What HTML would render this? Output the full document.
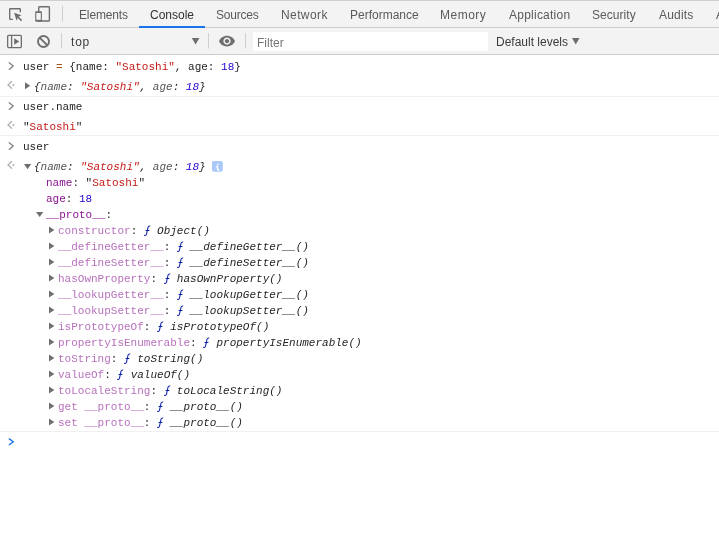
<!DOCTYPE html>
<html><head><meta charset="utf-8">
<style>
*{margin:0;padding:0;box-sizing:border-box}
html,body{width:719px;height:538px;overflow:hidden;background:#fff}
body{position:relative;font-family:"Liberation Sans",sans-serif}
.tabbar{position:absolute;left:0;top:0;width:719px;height:28px;background:#f3f3f3;border-top:1px solid #d0d0d0;border-bottom:1px solid #cdcdcd}
.tab{will-change:transform;position:absolute;top:7px;font-size:12px;color:#5a5a5a;white-space:nowrap}
.tab.sel{color:#333}
.underline{position:absolute;left:139px;top:25px;width:66px;height:2px;background:#1a73e8}
.toolbar{position:absolute;left:0;top:28px;width:719px;height:27px;background:#f3f3f3;border-bottom:1px solid #cdcdcd}
.vsep{position:absolute;width:1px;background:#ccc}
.filter{position:absolute;left:253px;top:32px;width:235px;height:19px;background:#fff}
.tb{will-change:transform;position:absolute;font-size:12px;color:#3c3c3c;white-space:nowrap}
.con{will-change:transform;position:absolute;left:0;top:55px;width:719px;font-family:"Liberation Mono",monospace;font-size:11px}
.row{position:absolute;left:0;white-space:pre;height:16px;line-height:16px;color:#242424}
.sep{position:absolute;left:0;width:719px;height:1px;background:#f0f0f0}
.s{color:#c41a16}
.n{color:#1c00cf}
.k{color:#881391}
.p{color:#a5a5a5}
.i{font-style:italic}
.fx{display:inline-block;vertical-align:top;overflow:visible}
.f{color:#0d22aa;font-style:italic}
.op{color:#a6541a}
.pk{color:#565656}
.kl{color:#b871bd}
i{font-style:italic}
.fx{display:inline-block;vertical-align:top;overflow:visible}
</style></head><body>
<div class="tabbar">
  <svg style="position:absolute;left:0;top:0" width="60" height="27"></svg>
  <div class="tab" style="left:79px;letter-spacing:-0.14px">Elements</div>
  <div class="tab sel" style="left:150px">Console</div>
  <div class="tab" style="left:216px;letter-spacing:-0.2px">Sources</div>
  <div class="tab" style="left:281px;letter-spacing:0.4px">Network</div>
  <div class="tab" style="left:350px">Performance</div>
  <div class="tab" style="left:440px;letter-spacing:0.5px">Memory</div>
  <div class="tab" style="left:509px;letter-spacing:0.24px">Application</div>
  <div class="tab" style="left:592px;letter-spacing:0.05px">Security</div>
  <div class="tab" style="left:659px;letter-spacing:0.2px">Audits</div>
  <div class="tab" style="left:716px">A</div>
  <div class="underline"></div>
</div>
<div class="toolbar"></div>
<div class="filter"></div>
<div class="tb" style="left:71px;top:35px;letter-spacing:0.8px">top</div>
<div class="tb" style="left:257px;top:36px;color:#757575">Filter</div>
<div class="tb" style="left:496px;top:35px">Default levels</div>

<div class="con">
<div class="row " style="top:4px;left:23px">user <span class="op">=</span> {name: <span class="s">"Satoshi"</span>, age: <span class="n">18</span>}</div>
<div class="row " style="top:24px;left:34px"><i>{<span class="pk">name</span>: <span class="s">"Satoshi"</span>, <span class="pk">age</span>: <span class="n">18</span>}</i></div>
<div class="row " style="top:44px;left:23px">user.name</div>
<div class="row " style="top:64px;left:23px">"<span class="s">Satoshi</span>"</div>
<div class="row " style="top:84px;left:23px">user</div>
<div class="row " style="top:104px;left:34px"><i>{<span class="pk">name</span>: <span class="s">"Satoshi"</span>, <span class="pk">age</span>: <span class="n">18</span>}</i></div>
<div class="row " style="top:120px;left:46px"><span class="k">name</span>: "<span class="s">Satoshi</span>"</div>
<div class="row " style="top:136px;left:46px"><span class="k">age</span>: <span class="n">18</span></div>
<div class="row " style="top:152px;left:46px"><span class="k">__proto__</span>:</div>
<div class="row " style="top:168px;left:58px"><span class="kl">constructor</span>: <svg class="fx" width="6.6" height="16" viewBox="0 0 6.6 16"><path d="M6.2 3.3 C5.4 2.8 4.3 3.0 4 4.3 L2.5 11.2 C2.2 12.4 1.2 12.8 0.2 12.3 M1.6 7.4 H5.4" fill="none" stroke="#0d22aa" stroke-width="1.05"/></svg> <i>Object()</i></div>
<div class="row " style="top:184px;left:58px"><span class="kl">__defineGetter__</span>: <svg class="fx" width="6.6" height="16" viewBox="0 0 6.6 16"><path d="M6.2 3.3 C5.4 2.8 4.3 3.0 4 4.3 L2.5 11.2 C2.2 12.4 1.2 12.8 0.2 12.3 M1.6 7.4 H5.4" fill="none" stroke="#0d22aa" stroke-width="1.05"/></svg> <i>__defineGetter__()</i></div>
<div class="row " style="top:200px;left:58px"><span class="kl">__defineSetter__</span>: <svg class="fx" width="6.6" height="16" viewBox="0 0 6.6 16"><path d="M6.2 3.3 C5.4 2.8 4.3 3.0 4 4.3 L2.5 11.2 C2.2 12.4 1.2 12.8 0.2 12.3 M1.6 7.4 H5.4" fill="none" stroke="#0d22aa" stroke-width="1.05"/></svg> <i>__defineSetter__()</i></div>
<div class="row " style="top:216px;left:58px"><span class="kl">hasOwnProperty</span>: <svg class="fx" width="6.6" height="16" viewBox="0 0 6.6 16"><path d="M6.2 3.3 C5.4 2.8 4.3 3.0 4 4.3 L2.5 11.2 C2.2 12.4 1.2 12.8 0.2 12.3 M1.6 7.4 H5.4" fill="none" stroke="#0d22aa" stroke-width="1.05"/></svg> <i>hasOwnProperty()</i></div>
<div class="row " style="top:232px;left:58px"><span class="kl">__lookupGetter__</span>: <svg class="fx" width="6.6" height="16" viewBox="0 0 6.6 16"><path d="M6.2 3.3 C5.4 2.8 4.3 3.0 4 4.3 L2.5 11.2 C2.2 12.4 1.2 12.8 0.2 12.3 M1.6 7.4 H5.4" fill="none" stroke="#0d22aa" stroke-width="1.05"/></svg> <i>__lookupGetter__()</i></div>
<div class="row " style="top:248px;left:58px"><span class="kl">__lookupSetter__</span>: <svg class="fx" width="6.6" height="16" viewBox="0 0 6.6 16"><path d="M6.2 3.3 C5.4 2.8 4.3 3.0 4 4.3 L2.5 11.2 C2.2 12.4 1.2 12.8 0.2 12.3 M1.6 7.4 H5.4" fill="none" stroke="#0d22aa" stroke-width="1.05"/></svg> <i>__lookupSetter__()</i></div>
<div class="row " style="top:264px;left:58px"><span class="kl">isPrototypeOf</span>: <svg class="fx" width="6.6" height="16" viewBox="0 0 6.6 16"><path d="M6.2 3.3 C5.4 2.8 4.3 3.0 4 4.3 L2.5 11.2 C2.2 12.4 1.2 12.8 0.2 12.3 M1.6 7.4 H5.4" fill="none" stroke="#0d22aa" stroke-width="1.05"/></svg> <i>isPrototypeOf()</i></div>
<div class="row " style="top:280px;left:58px"><span class="kl">propertyIsEnumerable</span>: <svg class="fx" width="6.6" height="16" viewBox="0 0 6.6 16"><path d="M6.2 3.3 C5.4 2.8 4.3 3.0 4 4.3 L2.5 11.2 C2.2 12.4 1.2 12.8 0.2 12.3 M1.6 7.4 H5.4" fill="none" stroke="#0d22aa" stroke-width="1.05"/></svg> <i>propertyIsEnumerable()</i></div>
<div class="row " style="top:296px;left:58px"><span class="kl">toString</span>: <svg class="fx" width="6.6" height="16" viewBox="0 0 6.6 16"><path d="M6.2 3.3 C5.4 2.8 4.3 3.0 4 4.3 L2.5 11.2 C2.2 12.4 1.2 12.8 0.2 12.3 M1.6 7.4 H5.4" fill="none" stroke="#0d22aa" stroke-width="1.05"/></svg> <i>toString()</i></div>
<div class="row " style="top:312px;left:58px"><span class="kl">valueOf</span>: <svg class="fx" width="6.6" height="16" viewBox="0 0 6.6 16"><path d="M6.2 3.3 C5.4 2.8 4.3 3.0 4 4.3 L2.5 11.2 C2.2 12.4 1.2 12.8 0.2 12.3 M1.6 7.4 H5.4" fill="none" stroke="#0d22aa" stroke-width="1.05"/></svg> <i>valueOf()</i></div>
<div class="row " style="top:328px;left:58px"><span class="kl">toLocaleString</span>: <svg class="fx" width="6.6" height="16" viewBox="0 0 6.6 16"><path d="M6.2 3.3 C5.4 2.8 4.3 3.0 4 4.3 L2.5 11.2 C2.2 12.4 1.2 12.8 0.2 12.3 M1.6 7.4 H5.4" fill="none" stroke="#0d22aa" stroke-width="1.05"/></svg> <i>toLocaleString()</i></div>
<div class="row " style="top:344px;left:58px"><span class="kl">get __proto__</span>: <svg class="fx" width="6.6" height="16" viewBox="0 0 6.6 16"><path d="M6.2 3.3 C5.4 2.8 4.3 3.0 4 4.3 L2.5 11.2 C2.2 12.4 1.2 12.8 0.2 12.3 M1.6 7.4 H5.4" fill="none" stroke="#0d22aa" stroke-width="1.05"/></svg> <i>__proto__()</i></div>
<div class="row " style="top:360px;left:58px"><span class="kl">set __proto__</span>: <svg class="fx" width="6.6" height="16" viewBox="0 0 6.6 16"><path d="M6.2 3.3 C5.4 2.8 4.3 3.0 4 4.3 L2.5 11.2 C2.2 12.4 1.2 12.8 0.2 12.3 M1.6 7.4 H5.4" fill="none" stroke="#0d22aa" stroke-width="1.05"/></svg> <i>__proto__()</i></div>
</div>
<svg style="position:absolute;left:0;top:0" width="719" height="538" viewBox="0 0 719 538">
<g fill="none" stroke="#6e6e6e" stroke-width="1.4">
  <path d="M12.8 19.3 H10.3 Q9.7 19.3 9.7 18.7 V9.3 Q9.7 8.7 10.3 8.7 H19.7 Q20.3 8.7 20.3 9.3 V12.2" stroke-width="1.35"/>
  <path d="M18.2 17.2 L21.6 20.6" stroke-width="1.6"/>
  <rect x="38.7" y="6.7" width="10.7" height="14.3" rx="0.8"/>
</g>
<path d="M14.1 12.8 L21.4 15.3 L18.3 16.9 L16.5 20.5 Z" fill="#6e6e6e"/>
<rect x="35.2" y="11.2" width="6.7" height="10.6" rx="0.8" fill="#6e6e6e"/>
<rect x="36.3" y="13" width="4.5" height="6.8" fill="#f3f3f3"/>
<g fill="none" stroke="#6e6e6e" stroke-width="1.3">
  <rect x="7.65" y="35.45" width="13.7" height="12.1" rx="1"/>
  <path d="M11.6 35.5 V47.5"/>
  <circle cx="43.5" cy="41.5" r="5.5" stroke-width="1.9"/>
  <path d="M39.6 37.6 L47.4 45.4" stroke-width="1.9"/>
</g>
<path d="M14.2 38.3 L19.2 41.5 L14.2 44.7 Z" fill="#6e6e6e"/>
<path d="M191.8 38 H199.4 L195.6 44.4 Z" fill="#6e6e6e"/>
<path d="M572 38 H579.5 L575.75 44.4 Z" fill="#6e6e6e"/>
<path transform="translate(227 41.1) scale(0.727) translate(-12 -12)" fill="#6e6e6e" d="M12 4.5C7 4.5 2.73 7.61 1 12c1.73 4.39 6 7.5 11 7.5s9.27-3.11 11-7.5c-1.73-4.39-6-7.5-11-7.5zM12 17c-2.76 0-5-2.24-5-5s2.24-5 5-5 5 2.24 5 5-2.24 5-5 5zm0-8c-1.66 0-3 1.34-3 3s1.34 3 3 3 3-1.34 3-3-1.34-3-3-3z"/>
<g fill="none" stroke="#808080" stroke-width="1.3" stroke-linecap="round">
  <path d="M9.2 62.8 L13.2 66.1 L9.2 69.4"/>
  <path d="M9.2 102.8 L13.2 106.1 L9.2 109.4"/>
  <path d="M9.2 142.8 L13.2 146.1 L9.2 149.4"/>
</g>
<g fill="none" stroke="#b0b0b0" stroke-width="1.3" stroke-linecap="round">
  <path d="M11.6 81.6 L8 84.9 L11.6 88.3"/>
  <path d="M11.6 121.6 L8 124.9 L11.6 128.3"/>
  <path d="M11.6 161.6 L8 164.9 L11.6 168.3"/>
</g>
<g fill="#b0b0b0">
  <circle cx="13.4" cy="84.9" r="1"/>
  <circle cx="13.4" cy="124.9" r="1"/>
  <circle cx="13.4" cy="164.9" r="1"/>
</g>
<path d="M9.3 438.9 L13.2 441.8 L9.3 444.7" fill="none" stroke="#1a73e8" stroke-width="1.35" stroke-linecap="round"/>
<g fill="#6e6e6e">
  <path d="M25 82.2 L30.2 85.75 L25 89.3 Z"/>
  <path d="M24 164 H31.2 L27.6 169.2 Z"/>
  <path d="M36 212 H43.3 L39.65 217 Z"/>
  <path d="M49 226.4 L54.3 230 L49 233.6 Z"/>
  <path d="M49 242.4 L54.3 246 L49 249.6 Z"/>
  <path d="M49 258.4 L54.3 262 L49 265.6 Z"/>
  <path d="M49 274.4 L54.3 278 L49 281.6 Z"/>
  <path d="M49 290.4 L54.3 294 L49 297.6 Z"/>
  <path d="M49 306.4 L54.3 310 L49 313.6 Z"/>
  <path d="M49 322.4 L54.3 326 L49 329.6 Z"/>
  <path d="M49 338.4 L54.3 342 L49 345.6 Z"/>
  <path d="M49 354.4 L54.3 358 L49 361.6 Z"/>
  <path d="M49 370.4 L54.3 374 L49 377.6 Z"/>
  <path d="M49 386.4 L54.3 390 L49 393.6 Z"/>
  <path d="M49 402.4 L54.3 406 L49 409.6 Z"/>
  <path d="M49 418.4 L54.3 422 L49 425.6 Z"/>
</g>
<rect x="212" y="161" width="10.8" height="10.8" rx="2" fill="#abc9f8"/>
<circle cx="217.8" cy="164.6" r="0.95" fill="#fff"/><path d="M215.9 166.8 H217.5 V168.8 Q217.5 170 218.5 170 H219.3" stroke="#fff" stroke-width="1.3" fill="none"/>
<g fill="#cfcfcf">
  <rect x="61" y="33" width="1" height="15.5"/>
  <rect x="208" y="33" width="1" height="15.5"/>
  <rect x="245" y="33" width="1" height="15.5"/>
  <rect x="62" y="6" width="1" height="15.5"/>
</g>
<g fill="#f0f0f0">
  <rect x="0" y="96" width="719" height="1"/>
  <rect x="0" y="135" width="719" height="1"/>
  <rect x="0" y="431" width="719" height="1"/>
</g>
</svg>
</body></html>
